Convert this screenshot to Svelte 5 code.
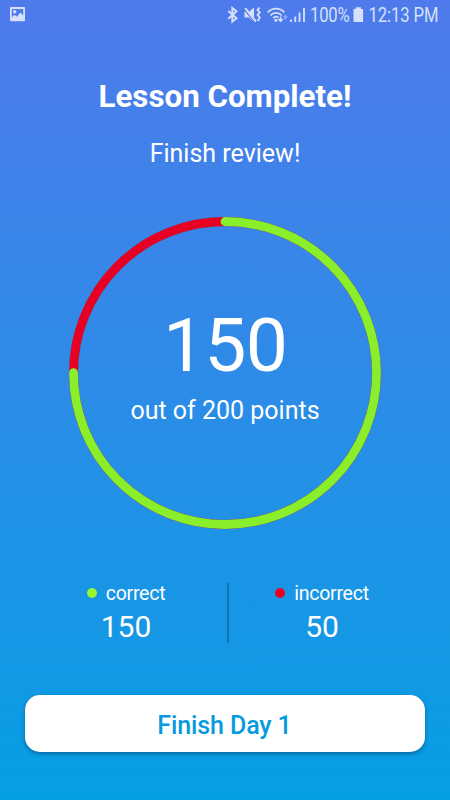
<script lang="ts">
  let correct = $state(150);
  let total = $state(200);
  let day = $state(1);

  let incorrect = $derived(total - correct);

  const radius = 151.5;
  const circumference = 2 * Math.PI * radius;

  let correctLength = $derived((correct / total) * circumference);
</script>

<div class="screen">
  <div class="status-bar">
    <svg class="picture" width="15" height="15" viewBox="0 0 15 15">
      <path
        fill="currentColor"
        fill-rule="evenodd"
        d="M1 0h13a1 1 0 0 1 1 1v12.300a1 1 0 0 1-1 1H1a1 1 0 0 1-1-1V1a1 1 0 0 1 1-1zM1.800 1.900v8.600L4.500 7.800l2.300 1.900L10.400 5.500l2.800 3V1.900z"
      />
      <circle cx="4.700" cy="4.800" r="1.700" fill="currentColor" />
    </svg>

    <svg class="indicators" width="216" height="24" viewBox="227 3 216 24">
      <!-- bluetooth -->
      <path
        d="M228.300 11l8.200 7.300-4.200 3.500V8l4.200 3.300-8.200 7.500"
        fill="none"
        stroke="currentColor"
        stroke-width="1.900"
      />
      <!-- muted, vibrate -->
      <path d="M244.500 11.800h4.500l5-4.300v14.700l-5-4.700h-4.500z" fill="currentColor" />
      <path d="M244.300 9.700l10.200 12.300" stroke="#4e7bea" stroke-width="1.300" />
      <path d="M245.200 8.200l10.800 13.300" stroke="currentColor" stroke-width="2" />
      <path
        d="M259.500 7.500l-1.900 2.400 2.200 2.500-2.200 2.500 2.200 2.500-1.900 3.800"
        fill="none"
        stroke="currentColor"
        stroke-width="1.900"
      />
      <!-- wifi -->
      <g fill="none" stroke="currentColor" stroke-width="1.800">
        <path d="M267.800 12.300a11.300 11.300 0 0 1 16.600 0" />
        <path d="M270.500 15.300a7.700 7.700 0 0 1 11.200 0" />
        <path d="M273.200 18a4 4 0 0 1 5.300-.4" />
      </g>
      <circle cx="275.900" cy="20.200" r="1.500" fill="currentColor" />
      <path d="M280.600 16.500v4.500m-2.200-2l2.200 2.200 2.200-2.200" fill="none" stroke="currentColor" stroke-width="1.500" />
      <path d="M285.300 20v-4.500m-1.900 2l1.900-2 1.900 2" fill="none" stroke="currentColor" stroke-opacity=".45" stroke-width="1.400" />
      <!-- signal -->
      <path
        d="M291 19.500v2.500M295.300 16.500v5.500M299.500 12.500v9.500M304 8v14"
        stroke="currentColor"
        stroke-width="1.800"
      />
      <text transform="translate(310 21.700) scale(.854 1)" textLength="46.500">100%</text>
      <!-- battery -->
      <path d="M353.500 9h2.200V7.300h5.200V9h2.200v13h-9.600z" fill="currentColor" />
      <text transform="translate(368.500 21.700) scale(.854 1)" textLength="82">12:13 PM</text>
    </svg>
  </div>

  <h1>Lesson Complete!</h1>
  <p class="subtitle">Finish review!</p>

  <div class="chart">
    <svg class="ring" width="314" height="314" viewBox="-157 -157 314 314">
      <circle class="ring-shade" r={radius} />
      <circle class="ring-incorrect" r={radius} />
      <circle
        class="ring-correct"
        r={radius}
        stroke-dasharray="{correctLength} {circumference}"
        transform="rotate(-90)"
      />
    </svg>
    <div class="score">
      <div class="points">{correct}</div>
      <div class="out-of">out of {total} points</div>
    </div>
  </div>

  <div class="stats">
    <div class="stat">
      <div class="label"><span class="dot green"></span>correct</div>
      <div class="value">{correct}</div>
    </div>
    <div class="divider"></div>
    <div class="stat">
      <div class="label"><span class="dot red"></span>incorrect</div>
      <div class="value">{incorrect}</div>
    </div>
  </div>

  <button class="finish">Finish Day {day}</button>
</div>

<style>
  :global(body) {
    margin: 0;
  }

  .screen {
    box-sizing: border-box;
    width: 450px;
    height: 800px;
    display: flex;
    flex-direction: column;
    align-items: center;
    overflow: hidden;
    background: linear-gradient(#4f7aeb, #069fe3);
    color: #fff;
    font-family: Roboto, "Liberation Sans", sans-serif;
  }

  .status-bar {
    box-sizing: border-box;
    width: 100%;
    height: 30px;
    padding: 3px 7px 0 10px;
    display: flex;
    justify-content: space-between;
    color: #d6e0fa;
  }

  .picture {
    margin-top: 4px;
  }

  .indicators text {
    font-size: 19.5px;
    fill: currentColor;
  }

  h1 {
    margin: 48px 0 0;
    font-size: 31.3px;
    font-weight: 700;
    line-height: 38px;
  }

  .subtitle {
    margin: 22px 0 0;
    font-size: 25px;
    line-height: 31px;
  }

  .chart {
    display: grid;
    justify-items: center;
    margin-top: 47px;
  }

  .ring,
  .score {
    grid-area: 1 / 1;
  }

  .ring circle {
    fill: none;
    stroke-width: 8.8;
  }

  .ring .ring-shade {
    stroke: #2f6f9e;
    stroke-opacity: 0.5;
    stroke-width: 9.3;
  }

  .ring-incorrect {
    stroke: #e60023;
  }

  .ring-correct {
    stroke: #8aef2b;
    stroke-linecap: round;
  }

  .score {
    padding-top: 85px;
    text-align: center;
  }

  .points {
    font-size: 75px;
    line-height: 88px;
    letter-spacing: -0.8px;
  }

  .out-of {
    margin-top: 7px;
    font-size: 25px;
    line-height: 30px;
  }

  .stats {
    width: 400px;
    display: grid;
    grid-template-columns: 202px 2px 186px;
    margin-top: 52.5px;
  }

  .stat {
    text-align: center;
  }

  .label {
    display: flex;
    align-items: center;
    justify-content: center;
    gap: 9px;
    font-size: 19.5px;
    line-height: 21px;
    letter-spacing: -0.25px;
  }

  .dot {
    width: 10px;
    height: 10px;
    margin-top: -1px;
    border-radius: 50%;
  }

  .green {
    background: #95f62e;
  }

  .red {
    background: #e60023;
  }

  .value {
    margin-top: 5px;
    font-size: 30px;
    line-height: 36px;
  }

  .divider {
    height: 60px;
    background: #1474b8;
  }

  .finish {
    width: 400px;
    height: 56.5px;
    margin-top: 50.5px;
    padding: 4px 1px 0 0;
    border: none;
    border-radius: 15px;
    background: #fff;
    box-shadow: 0 2px 4px rgba(0, 40, 80, 0.45);
    color: #079ae0;
    font-family: inherit;
    font-size: 25px;
    font-weight: 500;
    letter-spacing: -0.1px;
    cursor: pointer;
  }
</style>
